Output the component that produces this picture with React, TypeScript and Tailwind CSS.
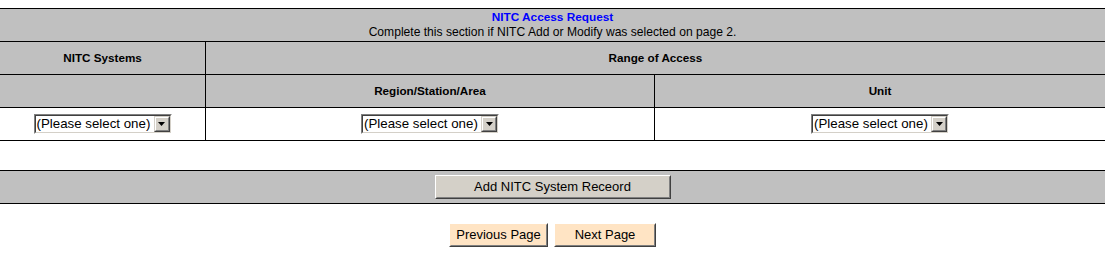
import React from "react";

function Arrow() {
  return (
    <span className="flex w-[16px] items-center justify-center border border-t-[#d4d0c8] border-l-[#d4d0c8] border-r-[#404040] border-b-[#404040] bg-[#d4d0c8]">
      <span className="flex h-full w-full items-center justify-center border border-t-white border-l-white border-r-[#808080] border-b-[#808080]">
        <svg width="7" height="4" viewBox="0 0 7 4">
          <path d="M0 0H7L3.5 4Z" fill="#000" />
        </svg>
      </span>
    </span>
  );
}

function FakeSelect() {
  return (
    <div className="inline-flex h-[20px] w-[138px] border border-t-[#808080] border-l-[#808080] border-r-white border-b-white bg-white align-middle">
      <div className="flex flex-1 border border-t-[#404040] border-l-[#404040] border-r-[#d4d0c8] border-b-[#d4d0c8]">
        <span className="flex-1 whitespace-nowrap pl-[1px] text-left text-[13.3px] leading-[16px] text-black">
          (Please select one)
        </span>
        <Arrow />
      </div>
    </div>
  );
}

function Btn({ children, className }: { children: React.ReactNode; className: string }) {
  return (
    <div
      className={`flex items-center justify-center border border-t-white border-l-white border-r-[#404040] border-b-[#404040] ${className}`}
    >
      <div className="flex h-full w-full items-center justify-center border border-transparent border-r-[#808080] border-b-[#808080] text-[13px] leading-[16px] text-black">
        {children}
      </div>
    </div>
  );
}

export default function App() {
  return (
    <div className="w-[1105px] h-[265px] bg-white pt-[8px] font-['Liberation_Sans',Arial,sans-serif] text-black">
      {/* title row */}
      <div className="flex h-[34px] flex-col items-center justify-center border-y border-black bg-[#c0c0c0] leading-[15px]">
        <div className="text-[11.8px] font-bold text-[#0000ff]">NITC Access Request</div>
        <div className="text-[12.1px]">Complete this section if NITC Add or Modify was selected on page 2.</div>
      </div>
      {/* header row 1 */}
      <div className="grid h-[33px] grid-cols-[205px_1fr] border-b border-black bg-[#c0c0c0] text-[11.7px] font-bold">
        <div className="flex items-center justify-center">NITC Systems</div>
        <div className="flex items-center justify-center border-l border-black">Range of Access</div>
      </div>
      {/* header row 2 */}
      <div className="grid h-[33px] grid-cols-[205px_449px_1fr] border-b border-black bg-[#c0c0c0] text-[11.7px] font-bold">
        <div />
        <div className="flex items-center justify-center border-l border-black">Region/Station/Area</div>
        <div className="flex items-center justify-center border-l border-black">Unit</div>
      </div>
      {/* selects row */}
      <div className="grid h-[33px] grid-cols-[205px_449px_1fr] border-b border-black bg-white">
        <div className="flex items-center justify-center">
          <FakeSelect />
        </div>
        <div className="flex items-center justify-center border-l border-black">
          <FakeSelect />
        </div>
        <div className="flex items-center justify-center border-l border-black">
          <FakeSelect />
        </div>
      </div>
      {/* add record band */}
      <div className="mt-[29px] flex h-[34px] items-center justify-center border-y border-black bg-[#c0c0c0]">
        <Btn className="h-[24px] w-[236px] bg-[#d4d0c8]">Add NITC System Receord</Btn>
      </div>
      {/* nav buttons */}
      <div className="mt-[19px] flex justify-center gap-[6px]">
        <Btn className="h-[24px] w-[99px] bg-[#ffe4c4]">Previous Page</Btn>
        <Btn className="h-[24px] w-[102px] bg-[#ffe4c4]">Next Page</Btn>
      </div>
    </div>
  );
}
